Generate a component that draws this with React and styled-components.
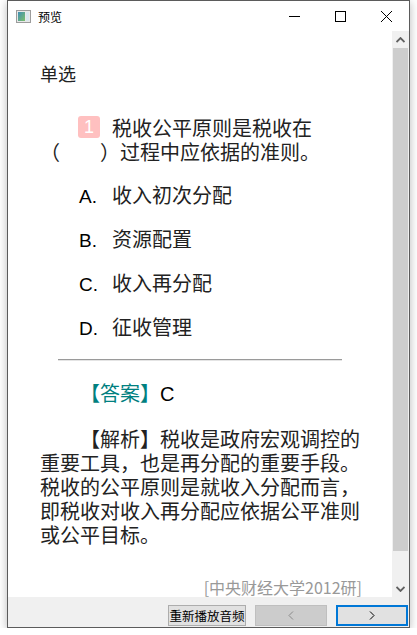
import React from 'react';
import styled, { createGlobalStyle } from 'styled-components';

const GlobalStyle = createGlobalStyle`
	html, body {
		margin: 0;
		padding: 0;
		background: #ffffff;
	}
	body {
		font-family: "Noto Sans CJK SC", "Liberation Sans", sans-serif;
		text-spacing-trim: space-all;
	}
`;

const CJK = `"Noto Sans CJK SC", sans-serif`;
const LATIN = `"Liberation Sans", "Noto Sans CJK SC", sans-serif`;

const question = {
	type: '单选',
	number: 1,
	text: '税收公平原则是税收在（\u3000\u3000）过程中应依据的准则。',
	options: [
		{ key: 'A', text: '收入初次分配' },
		{ key: 'B', text: '资源配置' },
		{ key: 'C', text: '收入再分配' },
		{ key: 'D', text: '征收管理' },
	],
	answer: 'C',
	analysis: '税收是政府宏观调控的重要工具，也是再分配的重要手段。税收的公平原则是就收入分配而言，即税收对收入再分配应依据公平准则或公平目标。',
	source: '[中央财经大学2012研]',
};

const Window = styled.div`
	box-sizing: border-box;
	width: 403px;
	height: 628px;
	margin-left: 7px;
	border: 1px solid #5b5b5b;
	background: #ffffff;
	display: flex;
	flex-direction: column;
	box-shadow: 0 2px 9px rgba(0, 0, 0, 0.28);
`;

const TitleBar = styled.div`
	height: 30px;
	display: flex;
	align-items: center;
	padding-left: 8px;
	flex-shrink: 0;
`;

const TitleText = styled.span`
	font-family: ${CJK};
	font-size: 12px;
	color: #000;
	margin-left: 7px;
	flex: 1;
`;

const WinButton = styled.div`
	width: 46px;
	height: 30px;
	display: flex;
	align-items: center;
	justify-content: center;
`;

const Main = styled.div`
	flex: 1;
	display: flex;
	min-height: 0;
`;

const Content = styled.div`
	flex: 1;
	padding-left: 32px;
	color: #222;
	font-family: ${CJK};
`;

const TypeLabel = styled.div`
	margin-top: 30px;
	font-size: 18px;
	line-height: 24px;
	color: #222;
`;

const Question = styled.p`
	margin: 31px 0 0;
	width: 290px;
	font-size: 20px;
	line-height: 24px;
	text-indent: 38px;
`;

const Badge = styled.span`
	display: inline-block;
	width: 22px;
	height: 22px;
	margin-right: 12px;
	border-radius: 3px;
	background: #ffc0c0;
	color: #fff;
	font-family: ${LATIN};
	font-size: 18px;
	line-height: 22px;
	text-align: center;
	text-indent: 0;
	vertical-align: top;
`;

const OptionList = styled.div`
	margin-top: 19px;
	padding-left: 39px;
	display: flex;
	flex-direction: column;
	gap: 20px;
`;

const Option = styled.div`
	display: flex;
	align-items: baseline;
	height: 24px;
	line-height: 24px;
	font-size: 20px;
`;

const OptionKey = styled.span`
	width: 33px;
	font-family: ${LATIN};
	font-size: 19px;
	color: #000;
`;

const Divider = styled.hr`
	margin: 20px 0 0 18px;
	width: 284px;
	border: none;
	border-top: 1px solid #9a9a9a;
	border-bottom: 1px solid #e4e4e4;
	height: 0;
`;

const AnswerLine = styled.div`
	margin-top: 20px;
	padding-left: 40px;
	font-size: 20px;
	line-height: 24px;
`;

const Tag = styled.span`
	color: ${(p) => p.$color || '#222'};
`;

const AnswerKey = styled.span`
	font-family: ${LATIN};
	color: #000;
`;

const Analysis = styled.p`
	margin: 21px 0 0;
	width: 322px;
	font-size: 20px;
	line-height: 24px;
	text-indent: 40px;
`;

const Source = styled.div`
	margin-top: 32px;
	width: 322px;
	text-align: right;
	font-size: 16px;
	line-height: 16px;
	color: #999;
`;

const ScrollBar = styled.div`
	width: 17px;
	background: #f0f0f0;
	display: flex;
	flex-direction: column;
	flex-shrink: 0;
`;

const ScrollArrow = styled.div`
	height: 17px;
	display: flex;
	align-items: center;
	justify-content: center;
`;

const ScrollTrack = styled.div`
	flex: 1;
	display: flex;
	flex-direction: column;
	padding: 0 1px;
`;

const ScrollThumb = styled.div`
	height: 503px;
	background: #cdcdcd;
`;

const BottomBar = styled.div`
	height: 30px;
	background: #f0f0f0;
	display: flex;
	justify-content: flex-end;
	align-items: flex-start;
	gap: 9px;
	padding: 8px 1px 0 0;
	box-sizing: border-box;
	flex-shrink: 0;
`;

const Button = styled.div`
	box-sizing: border-box;
	height: 21px;
	width: ${(p) => p.$width || 72}px;
	display: flex;
	align-items: center;
	justify-content: center;
	background: ${(p) => (p.$disabled ? '#cccccc' : '#e1e1e1')};
	border: ${(p) => (p.$focused ? '2px solid #0078d7' : p.$disabled ? '1px solid #bfbfbf' : '1px solid #adadad')};
	font-family: ${CJK};
	font-size: 12.5px;
	color: #000;
`;

const AppIcon = () => (
	<svg width="15" height="13" viewBox="0 0 15 13">
		<defs>
			<linearGradient id="ig" x1="0" y1="0" x2="1" y2="1">
				<stop offset="0" stopColor="#3f8fb5" />
				<stop offset="1" stopColor="#7cbf6a" />
			</linearGradient>
		</defs>
		<rect x="0.5" y="0.5" width="14" height="12" fill="#e8e8e8" stroke="#9c9c9c" />
		<rect x="2" y="2" width="7" height="9" fill="url(#ig)" />
		<rect x="10" y="2" width="3" height="9" fill="#d8e6ee" />
	</svg>
);

const Chevron = ({ dir, color = '#000', size = 9 }) => {
	const pts = {
		left: '5,0.5 1,4.5 5,8.5',
		right: '1,0.5 5,4.5 1,8.5',
		up: '0.5,5 4.5,1 8.5,5',
		down: '0.5,1 4.5,5 8.5,1',
	}[dir];
	const horizontal = dir === 'left' || dir === 'right';
	return (
		<svg width={horizontal ? 6 : size} height={horizontal ? size : 6} viewBox={horizontal ? '0 0 6 9' : '0 0 9 6'}>
			<polyline points={pts} fill="none" stroke={color} strokeWidth={dir === 'up' || dir === 'down' ? 1.8 : 1} />
		</svg>
	);
};

export default function App() {
	return (
		<>
			<GlobalStyle />
			<Window>
				<TitleBar>
					<AppIcon />
					<TitleText>预览</TitleText>
					<WinButton>
						<svg width="11" height="1"><line x1="0" y1="0.5" x2="11" y2="0.5" stroke="#000" /></svg>
					</WinButton>
					<WinButton>
						<svg width="11" height="11"><rect x="0.5" y="0.5" width="10" height="10" fill="none" stroke="#000" /></svg>
					</WinButton>
					<WinButton>
						<svg width="11" height="11">
							<line x1="0" y1="0" x2="11" y2="11" stroke="#000" />
							<line x1="11" y1="0" x2="0" y2="11" stroke="#000" />
						</svg>
					</WinButton>
				</TitleBar>
				<Main>
					<Content>
						<TypeLabel>{question.type}</TypeLabel>
						<Question>
							<Badge>{question.number}</Badge>
							{question.text}
						</Question>
						<OptionList>
							{question.options.map((o) => (
								<Option key={o.key}>
									<OptionKey>{o.key}.</OptionKey>
									<span>{o.text}</span>
								</Option>
							))}
						</OptionList>
						<Divider />
						<AnswerLine>
							<Tag $color="#008080">【答案】</Tag>
							<AnswerKey>{question.answer}</AnswerKey>
						</AnswerLine>
						<Analysis>
							<Tag>【解析】</Tag>
							{question.analysis}
						</Analysis>
						<Source>{question.source}</Source>
					</Content>
					<ScrollBar>
						<ScrollArrow>
							<Chevron dir="up" color="#606060" />
						</ScrollArrow>
						<ScrollTrack>
							<ScrollThumb />
						</ScrollTrack>
						<ScrollArrow>
							<Chevron dir="down" color="#606060" />
						</ScrollArrow>
					</ScrollBar>
				</Main>
				<BottomBar>
					<Button $width={78}>重新播放音频</Button>
					<Button $disabled>
						<Chevron dir="left" color="#8a8a8a" />
					</Button>
					<Button $focused>
						<Chevron dir="right" color="#000" />
					</Button>
				</BottomBar>
			</Window>
		</>
	);
}
